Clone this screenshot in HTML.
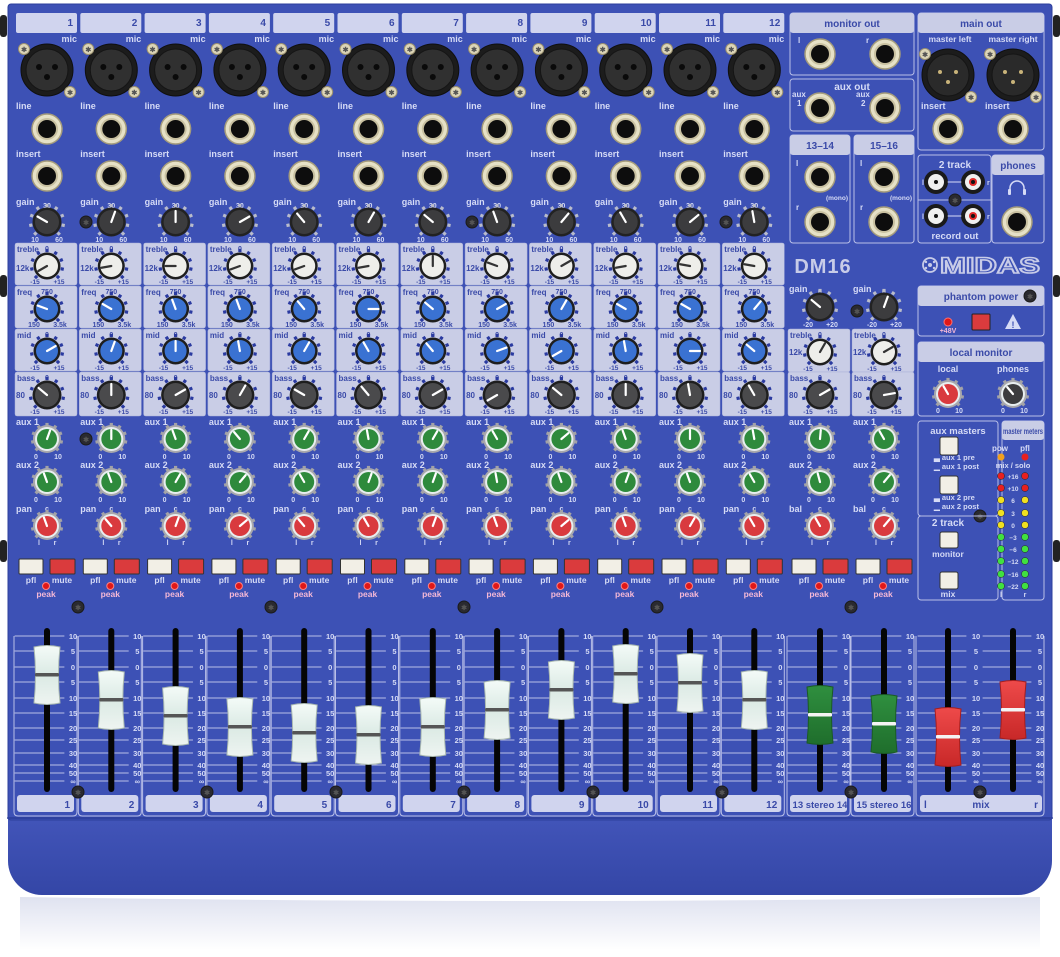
<!DOCTYPE html>
<html><head><meta charset="utf-8">
<style>
html,body{margin:0;padding:0;background:#fff;width:1060px;height:957px;overflow:hidden}
svg{display:block}
text{font-family:"Liberation Sans",sans-serif;font-weight:bold}
</style></head>
<body>
<svg id="s" width="1060" height="957" viewBox="0 0 1060 957" xmlns="http://www.w3.org/2000/svg">
<defs>
<linearGradient id="refl" x1="0" y1="0" x2="0" y2="1"><stop offset="0" stop-color="#dfe2f0"/><stop offset="1" stop-color="#ffffff"/></linearGradient>
<linearGradient id="lip" x1="0" y1="0" x2="0" y2="1"><stop offset="0" stop-color="#3e52b6"/><stop offset="0.3" stop-color="#4558bd"/><stop offset="1" stop-color="#3446a6"/></linearGradient>
<linearGradient id="capw" x1="0" y1="0" x2="0" y2="1"><stop offset="0" stop-color="#f4fbf8"/><stop offset="0.5" stop-color="#dbeae4"/><stop offset="1" stop-color="#eef4f1"/></linearGradient>
<linearGradient id="capg" x1="0" y1="0" x2="0" y2="1"><stop offset="0" stop-color="#2f8f3f"/><stop offset="1" stop-color="#1f6e2c"/></linearGradient>
<linearGradient id="capr" x1="0" y1="0" x2="0" y2="1"><stop offset="0" stop-color="#ee4a4a"/><stop offset="1" stop-color="#c82828"/></linearGradient>
</defs>
<g id="g"></g>
</svg>
<script>
var o=[];
function R(x,y,w,h,rx,f,s,sw){o.push('<rect x="'+x+'" y="'+y+'" width="'+w+'" height="'+h+'" rx="'+(rx||0)+'" fill="'+f+'"'+(s?' stroke="'+s+'" stroke-width="'+(sw||1)+'"':'')+'/>');}
function C(x,y,r,f,s,sw){o.push('<circle cx="'+x+'" cy="'+y+'" r="'+r+'" fill="'+f+'"'+(s?' stroke="'+s+'" stroke-width="'+(sw||1)+'"':'')+'/>');}
function T(x,y,t,sz,a,f,extra){o.push('<text x="'+x+'" y="'+y+'" font-size="'+sz+'" text-anchor="'+(a||'start')+'" fill="'+(f||'#d6dbf6')+'" '+(extra||'')+'>'+t+'</text>');}
function L(x1,y1,x2,y2,s,w){o.push('<line x1="'+x1+'" y1="'+y1+'" x2="'+x2+'" y2="'+y2+'" stroke="'+s+'" stroke-width="'+w+'" stroke-linecap="round"/>');}
var LAB='#d6dbf6', DK='#3a4aa8', BOX='#c9cde6', LINE='#b9bfe8';
o.push('<path d="M20 897 Q530 905 1040 897 L1040 950 L20 950Z" fill="url(#refl)"/>');
R(8,760,1044,135,34,'url(#lip)');
R(8,4,1044,816,3,'#3d51b5','#2d3f9c',1);
L(8,818,1052,818,'#2f419f',2);
[[0,15],[0,275],[0,540],[1053,15],[1053,275],[1053,540]].forEach(function(p){R(p[0],p[1],7,22,3,'#222');});
function screw(x,y){C(x,y,6,'#2a2a30','#1a1a1a');T(x,y+3,'✱',7,'middle','#555');}
function xlr(cx,cy,male){C(cx,cy,26,'#1c1c1c','#0f0f0f',1);C(cx,cy,21,male?'#2a2a2a':'#303030','#151515');
 if(male){C(cx-8,cy-3,2,'#c9b47a');C(cx+8,cy-3,2,'#c9b47a');C(cx,cy+7,2,'#c9b47a');}
 else{C(cx-8,cy-3,3,'#0a0a0a');C(cx+8,cy-3,3,'#0a0a0a');C(cx,cy+7,3,'#0a0a0a');}
 C(cx-23,cy-21,5.5,'#ddd6b8','#9a9070');T(cx-23,cy-18,'✱',7,'middle','#555');
 C(cx+23,cy+22,5.5,'#ddd6b8','#9a9070');T(cx+23,cy+25,'✱',7,'middle','#555');}
function jack(cx,cy){C(cx,cy,15,'#e6e1c6','#a59c7c',1.5);C(cx,cy,11,'#c8c0a0');C(cx,cy,9,'#0d0d0d');}
function rca(cx,cy,red){C(cx,cy,12,'#1a1a1a');C(cx,cy,8,'#f0f0f0');C(cx,cy,4,red?'#e02828':'#eee');C(cx,cy,2,'#111');}
function knob(cx,cy,type,ang){
 var a=ang*Math.PI/180, r=11, body, ring, tick, ptr='#fff', n=9, ts=3.2;
 if(type=='gain'){body='#3c3c3e';ring='#222';tick='#b9bccb';r=12;}
 if(type=='treble'){body='#eeeeea';ring='#1e1e1e';tick='#2a3aa0';ptr='#333';}
 if(type=='blue'){body='#3a72d2';ring='#1e1e1e';tick='#2a3aa0';}
 if(type=='bass'){body='#4a4a4c';ring='#1e1e1e';tick='#2a3aa0';r=12;}
 if(type=='green'){body='#2e8a3c';ring='#e8eef0';tick='#a2a2a6';r=10;}
 if(type=='red'){body='#d93a3e';ring='#e8eef0';tick='#a2a2a6';r=10;}
 if(type=='dark'){body='#3c3c3e';ring='#e8eef0';tick='#a2a2a6';r=10;}
 for(var i=0;i<n;i++){var t=(-135+270*i/(n-1))*Math.PI/180;var tx=cx+Math.sin(t)*(r+4.5),ty=cy-Math.cos(t)*(r+4.5);
  o.push('<rect x="'+(tx-ts/2)+'" y="'+(ty-ts/2)+'" width="'+ts+'" height="'+ts+'" fill="'+tick+'" transform="rotate('+(t*180/Math.PI)+' '+tx+' '+ty+')"/>');}
 if(type=='green'||type=='red'||type=='dark'){C(cx,cy,r+4,'#a8a8ac');C(cx,cy,r+2,ring);}
 else C(cx,cy,r+2.5,ring);
 C(cx,cy,r,body);
 L(cx,cy,cx+Math.sin(a)*(r-1),cy-Math.cos(a)*(r-1),ptr,2.2);
}
var ang={gain:[-60,20,0,60,-40,30,-50,-20,40,-30,50,-10],tr:[-120,-100,-90,-110,-110,-100,0,-70,60,-100,-80,-80],fr:[-70,-60,-20,-20,-40,90,-50,60,30,-60,-60,40],mi:[60,20,0,-10,30,-30,-40,70,-120,-10,90,-50],ba:[-50,0,60,30,-60,-40,60,-120,-50,0,-10,-30],a1:[20,0,-20,-40,30,-10,30,-30,50,-20,0,-10],a2:[-20,-20,30,40,-30,20,20,-10,-20,20,-20,-30],pn:[-20,-40,20,50,-40,-30,20,-20,50,-20,30,-30]};
var FAD=[675,700,716,727,733,735,727,710,690,674,683,700];
var SC=[[636,'10'],[651,'5'],[667,'0'],[682,'5'],[698,'10'],[713,'15'],[728,'20'],[740,'25'],[753,'30'],[765,'40'],[773,'50'],[781,'∞']];
function scale(x0,x1,nx){for(var i=0;i<SC.length;i++){L(x0,SC[i][0],x1,SC[i][0],LINE,1);T(nx,SC[i][0]+3,SC[i][1],7.5,'middle',LAB);}}
function fader(cx,cy,kind){R(cx-3,628,6,164,3,'#050505');
 var f=kind=='g'?'url(#capg)':kind=='r'?'url(#capr)':'url(#capw)', st=kind=='g'?'#1b5a25':kind=='r'?'#a51e1e':'#a9b8b0';
 o.push('<path d="M'+(cx-13)+' '+(cy-28)+' Q'+cx+' '+(cy-31)+' '+(cx+13)+' '+(cy-28)+' Q'+(cx+10)+' '+cy+' '+(cx+13)+' '+(cy+28)+' Q'+cx+' '+(cy+31)+' '+(cx-13)+' '+(cy+28)+' Q'+(cx-10)+' '+cy+' '+(cx-13)+' '+(cy-28)+'Z" fill="'+f+'" stroke="'+st+'"/>');
 R(cx-12,cy-2,24,3.5,1,kind=='w'?'#555':'#f4f4f4');}
function strip(Lx,i,stereo){
 var cx=Lx+31;
 function sbox(y,h){R(Lx-1,y,62,h,2,BOX,'#a9afd8',0.5);}
 if(!stereo){
  R(Lx,13,61,20,2,'#d0d4ee');T(Lx+57,26,String(i+1),10,'end',DK);
  T(Lx+61,42,'mic',9,'end');xlr(cx,70);
  T(Lx,109,'line',9);jack(cx,129);T(Lx,157,'insert',9);jack(cx,176);
  T(Lx,205,'gain',9);T(cx,208,'30',7,'middle');knob(cx,222,'gain',ang.gain[i]);T(cx-12,242,'10',7,'middle');T(cx+12,242,'60',7,'middle');
  sbox(243,42);T(Lx+1,252,'treble',8,'start',DK);T(Lx,271,'12k',8,'start',DK);T(cx,251,'0',7,'middle',DK);knob(cx,266,'treble',ang.tr[i]);T(cx-12,284,'-15',6.5,'middle',DK);T(cx+12,284,'+15',6.5,'middle',DK);
  sbox(286,42);T(Lx+1,295,'freq',8,'start',DK);T(cx,294,'750',7,'middle',DK);knob(cx,309,'blue',ang.fr[i]);T(cx-13,327,'150',7,'middle',DK);T(cx+13,327,'3.5k',7,'middle',DK);
  sbox(329,42);T(Lx+1,338,'mid',8,'start',DK);T(cx,337,'0',7,'middle',DK);knob(cx,351,'blue',ang.mi[i]);T(cx-12,370,'-15',6.5,'middle',DK);T(cx+12,370,'+15',6.5,'middle',DK);
  sbox(372,44);T(Lx+1,381,'bass',8,'start',DK);T(Lx,398,'80',8,'start',DK);T(cx,380,'0',7,'middle',DK);knob(cx,395,'bass',ang.ba[i]);T(cx-12,414,'-15',6.5,'middle',DK);T(cx+12,414,'+15',6.5,'middle',DK);
 } else {
  T(Lx,292,'gain',9);T(cx,294,'0',7,'middle');knob(cx,307,'gain',i==12?-50:20);T(cx-12,327,'-20',7,'middle');T(cx+12,327,'+20',7,'middle');
  sbox(329,43);T(Lx+1,338,'treble',8,'start',DK);T(Lx,355,'12k',8,'start',DK);T(cx,337,'0',7,'middle',DK);knob(cx,352,'treble',i==12?30:60);T(cx-12,371,'-15',6.5,'middle',DK);T(cx+12,371,'+15',6.5,'middle',DK);
  sbox(372,44);T(Lx+1,381,'bass',8,'start',DK);T(Lx,398,'80',8,'start',DK);T(cx,380,'0',7,'middle',DK);knob(cx,395,'bass',i==12?60:80);T(cx-12,414,'-15',6.5,'middle',DK);T(cx+12,414,'+15',6.5,'middle',DK);
 }
 var k=i%12;
 T(Lx,425,'aux 1',9);knob(cx,439,'green',stereo?(i==12?5:-30):ang.a1[k]);T(cx-11,459,'0',7,'middle');T(cx+11,459,'10',7,'middle');
 T(Lx,468,'aux 2',9);knob(cx,482,'green',stereo?(i==12?-15:40):ang.a2[k]);T(cx-11,502,'0',7,'middle');T(cx+11,502,'10',7,'middle');
 T(Lx,512,stereo?'bal':'pan',9);T(cx,511,'c',7,'middle');knob(cx,526,'red',stereo?(i==12?-30:40):ang.pn[k]);T(cx-8,545,'l',7,'middle');T(cx+8,545,'r',7,'middle');
 R(Lx+3,559,24,15,1,'#f2efe6','#333');R(Lx+34,559,25,15,1,'#da3b3d','#333');
 T(Lx+15,583,'pfl',8.5,'middle');T(Lx+46,583,'mute',8.5,'middle');C(Lx+30,586,3.5,'#e01818','#ff8080');T(Lx+30,597,'peak',8.5,'middle','#f4b8d6');
 o.push('<path d="M'+(Lx-2)+' 636 L'+(Lx-2)+' 812 Q'+(Lx-2)+' 816 '+(Lx+2)+' 816 L'+(Lx+57)+' 816 Q'+(Lx+61)+' 816 '+(Lx+61)+' 812 L'+(Lx+61)+' 636" fill="none" stroke="'+LINE+'" stroke-width="1"/>');
 scale(Lx-1,Lx+48,Lx+57);
 R(Lx+1,795,57,17,3,'#d0d4ee');
 if(!stereo)T(Lx+54,808,String(i+1),10,'end',DK);
 else T(cx,808,i==12?'13 stereo 14':'15 stereo 16',9.5,'middle',DK);
 fader(cx,stereo?(i==12?715:724):FAD[i],stereo?'g':'w');
}
for(var i=0;i<12;i++)strip(16+64.3*i,i,false);
strip(789,12,true);strip(853,13,true);
[[86,222],[86,439],[472,222],[726,222],[857,311],[980,516],[78,607],[271,607],[464,607],[657,607],[851,607]].forEach(function(p){screw(p[0],p[1]);});
[78,207,336,464,593,722,851,980].forEach(function(x){screw(x,792);});
function box(x,y,w,h,head,hh){R(x,y,w,h,3,'none',LINE,1);if(head){R(x,y,w,hh||20,3,BOX);T(x+w/2,y+14,head,10,'middle',DK);}}
box(790,13,124,62,'monitor out');T(798,43,'l',8);T(866,43,'r',8);jack(820,54);jack(885,54);
box(790,79,124,52);T(852,90,'aux out',10,'middle');T(792,97,'aux',8);T(797,106,'1',8);T(856,97,'aux',8);T(861,106,'2',8);jack(820,108);jack(885,108);
box(790,135,60,108,'13–14');box(854,135,60,108,'15–16');
[790,854].forEach(function(x){T(x+6,166,'l',8);jack(x+30,177);T(x+58,200,'(mono)',6.5,'end');T(x+6,210,'r',8);jack(x+30,222);});
box(918,13,126,137,'main out');T(950,42,'master left',8.5,'middle');T(1013,42,'master right',8.5,'middle');xlr(948,75,true);xlr(1013,75,true);
T(921,109,'insert',9);T(985,109,'insert',9);jack(948,129);jack(1013,129);
box(918,155,73,88);T(955,168,'2 track',10,'middle');L(918,200,991,200,LINE,1);
rca(936,182,false);rca(973,182,true);L(948,182,961,182,LAB,1);T(922,185,'l',7);T(987,185,'r',7);
rca(936,216,false);rca(973,216,true);L(948,216,961,216,LAB,1);T(922,219,'l',7);T(987,219,'r',7);screw(955,200);
T(955,239,'record out',9.5,'middle');
box(992,155,52,88,'phones');
o.push('<path d="M1010 192 v-4 a7 7 0 0 1 14 0 v4" fill="none" stroke="'+LAB+'" stroke-width="1.5"/>');R(1008,189,3,6,1,LAB);R(1023,189,3,6,1,LAB);
jack(1017,222);
T(823,273,'DM16',20,'middle','#c8cce8','letter-spacing="1"');
C(930,265,7,'none','#c8cce8',1.8);C(930,265,2,'#c8cce8');C(926,262,1.2,'#c8cce8');C(934,262,1.2,'#c8cce8');C(926,268,1.2,'#c8cce8');C(934,268,1.2,'#c8cce8');
T(990,273,'MIDAS',22,'middle','none','stroke="#c8cce8" stroke-width="1.6" textLength="100" lengthAdjust="spacingAndGlyphs"');
box(918,286,126,50,'phantom power');screw(1030,296);
C(948,322,4,'#e01818','#ff7070');T(948,333,'+48V',7,'middle','#f4b8d6');R(972,314,18,16,1,'#da3b3d','#222');
o.push('<path d="M1013 314 L1021 329 L1005 329Z" fill="#d6dbf6"/>');T(1013,328,'!',9,'middle','#3d51b5');
box(918,342,126,74,'local monitor');T(948,372,'local',9,'middle');T(1013,372,'phones',9,'middle');
knob(948,394,'red',-30);knob(1013,394,'dark',-40);T(938,413,'0',7,'middle');T(959,413,'10',7,'middle');T(1003,413,'0',7,'middle');T(1024,413,'10',7,'middle');
box(918,421,80,95);box(918,516,80,84);
T(958,434,'aux masters',9.5,'middle');R(940,437,18,18,2,'#f2efe6','#333');T(934,460,'▃ aux 1 pre',7.5,'start');T(934,469,'▁ aux 1 post',7.5,'start');
R(940,476,18,18,2,'#f2efe6','#333');T(934,500,'▃ aux 2 pre',7.5,'start');T(934,509,'▁ aux 2 post',7.5,'start');
T(948,526,'2 track',10,'middle');R(940,532,18,16,2,'#f2efe6','#333');T(948,557,'monitor',8.5,'middle');R(940,572,18,17,2,'#f2efe6','#333');T(948,597,'mix',8.5,'middle');
box(1002,421,42,179);R(1002,421,42,19,3,BOX);T(1023,434,'master meters',8,'middle',DK,'textLength="40" lengthAdjust="spacingAndGlyphs"');
T(1000,451,'pow',8,'middle');T(1025,451,'pfl',8,'middle');C(1001,457,3.5,'#f0a020');C(1025,457,3.5,'#e82020');T(1013,468,'mix / solo',7.5,'middle');
var my=[476,488,500,513,525,537,549,561,574,586],ml=['+16','+10','6','3','0','−3','−6','−12','−16','−22'];
for(var j=0;j<10;j++){var col=j<2?'#e82020':j<5?'#f0e020':'#40e040';C(1001,my[j],3.5,col,'#222',0.5);C(1025,my[j],3.5,col,'#222',0.5);T(1013,my[j]+3,ml[j],6.5,'middle');}
T(1001,597,'l',7,'middle');T(1025,597,'r',7,'middle');
o.push('<path d="M916 636 L916 812 Q916 816 920 816 L1040 816 Q1044 816 1044 812 L1044 636" fill="none" stroke="'+LINE+'" stroke-width="1"/>');
scale(918,966,976);scale(983,1031,1040);
R(920,795,122,17,3,'#d0d4ee');T(924,808,'l',10,'start',DK);T(981,808,'mix',10,'middle',DK);T(1038,808,'r',10,'end',DK);
fader(948,737,'r');fader(1013,710,'r');screw(980,792);
document.getElementById('g').innerHTML=o.join('');
</script>
</body></html>
